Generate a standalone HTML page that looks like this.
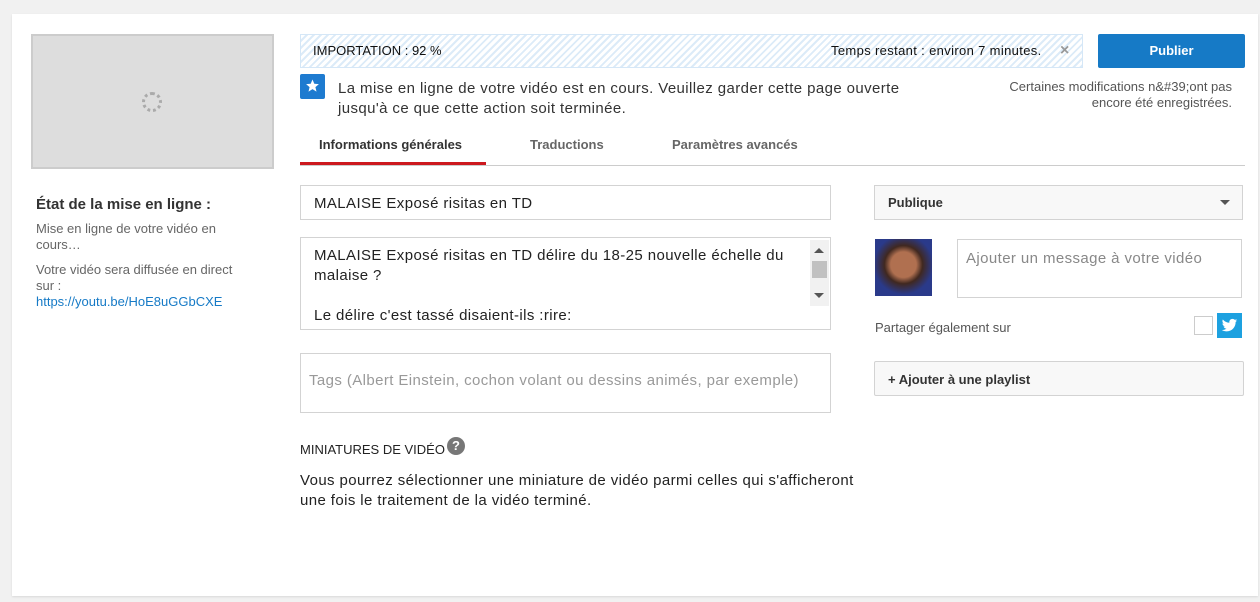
<!DOCTYPE html>
<html><head><meta charset="utf-8"><style>
*{box-sizing:border-box}
body{margin:0;width:1260px;height:602px;background:#f1f1f1;font-family:"Liberation Sans",Arial,sans-serif;position:relative;overflow:hidden;color:#222}
.card{position:absolute;left:12px;top:14px;width:1246px;height:582px;background:#fff;box-shadow:0 1px 2px rgba(0,0,0,.1)}
.a{position:absolute}
.thumb{left:31px;top:34px;width:243px;height:135px;background:#ddd;border:2px solid #ccc}
.inp{border:1px solid #d3d3d3;background:#fff}
.ls{letter-spacing:.4px}
</style></head><body>
<div class="card"></div>
<div class="a thumb"></div>
<div class="a" style="left:142px;top:92px;width:20px;height:20px;border-radius:50%;border:3px dotted #aaa"></div>
<div class="a" style="left:36px;top:196px;font-size:15px;font-weight:bold;color:#333">État de la mise en ligne :</div>
<div class="a" style="left:36px;top:221px;font-size:13px;color:#666;line-height:16px;width:210px">Mise en ligne de votre vidéo en cours…</div>
<div class="a" style="left:36px;top:262px;font-size:13px;color:#666;line-height:16px;width:212px">Votre vidéo sera diffusée en direct sur : <span style="color:#167ac6">https://youtu.be/HoE8uGGbCXE</span></div>

<div class="a" style="left:300px;top:34px;width:783px;height:34px;border:1px solid #d5e7f7;background:repeating-linear-gradient(135deg,#fff 0 3px,#dcebf8 3px 5px)"></div>
<div class="a" style="left:313px;top:43px;font-size:13px;color:#111">IMPORTATION : 92 %</div>
<div class="a" style="left:831px;top:43px;font-size:13px;color:#111;letter-spacing:.35px">Temps restant : environ 7 minutes.</div>
<div class="a" style="left:1060px;top:42px;font-size:16px;color:#999;font-weight:bold">×</div>
<div class="a" style="left:1098px;top:34px;width:147px;height:34px;background:#167ac6;border-radius:2px;color:#fff;font-weight:bold;font-size:13px;text-align:center;line-height:34px">Publier</div>
<div class="a" style="left:980px;top:79px;width:252px;text-align:right;font-size:13px;color:#555;line-height:16px">Certaines modifications n&amp;#39;ont pas encore été enregistrées.</div>
<div class="a" style="left:300px;top:74px;width:25px;height:25px;background:#1e7bd0;border-radius:2px"><svg width="25" height="25" viewBox="0 0 25 25"><path d="M12.5 5.5l1.8 4.3 4.6.3-3.5 3 1.1 4.5-4-2.5-4 2.5 1.1-4.5-3.5-3 4.6-.3z" fill="#fff"/></svg></div>
<div class="a ls" style="left:338px;top:79px;font-size:15px;line-height:20px;color:#333;width:590px">La mise en ligne de votre vidéo est en cours. Veuillez garder cette page ouverte jusqu'à ce que cette action soit terminée.</div>

<div class="a" style="left:300px;top:165px;width:945px;height:1px;background:#ccc"></div>
<div class="a" style="left:300px;top:162px;width:186px;height:3px;background:#cc181e"></div>
<div class="a" style="left:319px;top:137px;font-size:13px;font-weight:bold;color:#333">Informations générales</div>
<div class="a" style="left:530px;top:137px;font-size:13px;font-weight:bold;color:#666">Traductions</div>
<div class="a" style="left:672px;top:137px;font-size:13px;font-weight:bold;color:#666">Paramètres avancés</div>

<div class="a inp ls" style="left:300px;top:185px;width:531px;height:35px;padding:9px 13px;font-size:15px;color:#222">MALAISE Exposé risitas en TD</div>
<div class="a inp ls" style="left:300px;top:237px;width:531px;height:93px;padding:8px 13px;font-size:15px;line-height:20px;color:#222;overflow:hidden">MALAISE Exposé risitas en TD délire du 18-25 nouvelle échelle du<br>malaise ?<br><br>Le délire c'est tassé disaient-ils :rire:</div>
<div class="a" style="left:810px;top:240px;width:19px;height:66px;background:#f1f1f1"></div>
<div class="a" style="left:814px;top:248px;border:5px solid transparent;border-bottom:5px solid #555;border-top:0"></div>
<div class="a" style="left:814px;top:293px;border:5px solid transparent;border-top:5px solid #555;border-bottom:0"></div>
<div class="a" style="left:812px;top:261px;width:15px;height:17px;background:#c1c1c1"></div>
<div class="a inp ls" style="left:300px;top:353px;width:531px;height:60px;padding:18px 8px;font-size:15px;color:#999">Tags (Albert Einstein, cochon volant ou dessins animés, par exemple)</div>
<div class="a" style="left:300px;top:442px;font-size:13px;color:#222">MINIATURES DE VIDÉO</div>
<div class="a" style="left:447px;top:437px;width:18px;height:18px;border-radius:50%;background:#777;color:#fff;font-size:13px;font-weight:bold;text-align:center;line-height:18px">?</div>
<div class="a ls" style="left:300px;top:471px;font-size:15px;line-height:20px;color:#222;width:575px">Vous pourrez sélectionner une miniature de vidéo parmi celles qui s'afficheront une fois le traitement de la vidéo terminé.</div>

<div class="a" style="left:874px;top:185px;width:369px;height:35px;border:1px solid #d3d3d3;background:#f8f8f8;padding:9px 13px;font-size:13px;font-weight:bold;color:#333">Publique</div>
<div class="a" style="left:1220px;top:200px;border:5px solid transparent;border-top:5px solid #555"></div>
<div class="a" style="left:875px;top:239px;width:57px;height:57px;background:radial-gradient(circle at 50% 45%,#b07050 0 30%,#402820 45%,#2a3a8a 70%)"></div>
<div class="a inp ls" style="left:957px;top:239px;width:285px;height:59px;padding:10px 8px;font-size:15px;color:#888">Ajouter un message à votre vidéo</div>
<div class="a" style="left:875px;top:320px;font-size:13px;color:#555">Partager également sur</div>
<div class="a" style="left:1194px;top:316px;width:19px;height:19px;border:1px solid #ccc"></div>
<div class="a" style="left:1217px;top:313px;width:25px;height:25px;background:#1da1e0"><svg width="25" height="25" viewBox="0 0 24 24"><path transform="translate(4 4) scale(.67)" d="M23 4.6c-.8.4-1.7.6-2.6.7.9-.6 1.6-1.4 2-2.5-.9.5-1.900.9-2.9 1.1C18.6 3 17.4 2.5 16.2 2.5c-2.5 0-4.5 2-4.5 4.5 0 .4 0 .7.1 1C8 7.800 4.600 6 2.400 3.300c-.4.7-.6 1.4-.6 2.3 0 1.6.8 2.9 2 3.7-.7 0-1.4-.2-2-.6v.1c0 2.2 1.6 4 3.6 4.4-.4.1-.8.2-1.2.2-.3 0-.6 0-.8-.1.6 1.8 2.2 3.1 4.2 3.1-1.500 1.200-3.500 1.900-5.600 1.900H1c2 1.3 4.4 2 6.9 2 8.3 0 12.8-6.9 12.8-12.8v-.6c.9-.6 1.6-1.4 2.3-2.4z" fill="#fff"/></svg></div>
<div class="a" style="left:874px;top:361px;width:370px;height:35px;border:1px solid #d3d3d3;background:#f8f8f8;border-radius:2px;padding:10px 13px;font-size:13px;font-weight:bold;color:#333">+ Ajouter à une playlist</div>
</body></html>
